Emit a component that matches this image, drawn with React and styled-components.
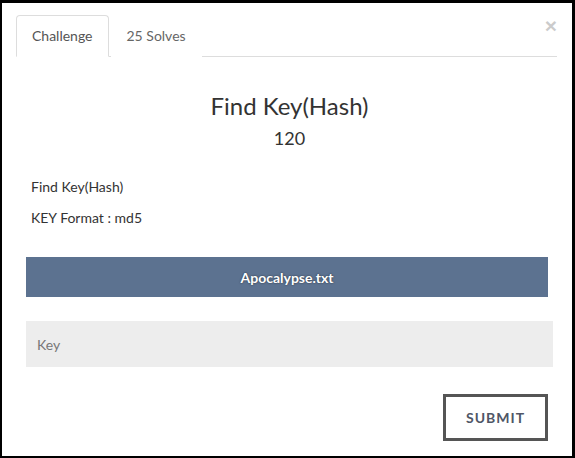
import React from 'react';
import styled, { createGlobalStyle } from 'styled-components';

const GlobalStyle = createGlobalStyle`
  html, body {
    margin: 0;
    padding: 0;
    background: #000;
  }
  body {
    font-family: Lato, "Open Sans", sans-serif;
    color: #333;
  }
`;

const Modal = styled.div`
  position: relative;
  box-sizing: border-box;
  width: 575px;
  height: 458px;
  background: #fff;
  border-style: solid;
  border-color: #000;
  border-width: 3px 3px 2px 2px;
  padding: 12px 15px 0 14px;
`;

const CloseButton = styled.button`
  position: absolute;
  top: 12px;
  right: 15px;
  padding: 0;
  border: 0;
  background: transparent;
  font-family: "Liberation Sans", Arial, sans-serif;
  font-size: 21px;
  font-weight: 700;
  line-height: 1;
  color: #000;
  opacity: 0.2;
  cursor: pointer;
`;

const Tabs = styled.ul`
  display: flex;
  margin: 0;
  padding: 0;
  list-style: none;
  border-bottom: 1px solid #ddd;
`;

const Tab = styled.li`
  margin-bottom: -1px;
  margin-right: 2px;
  padding: 10px 15px;
  font-size: 14px;
  line-height: 20px;
  color: ${(p) => (p.$active ? '#555' : '#666')};
  background: #fff;
  border: 1px solid ${(p) => (p.$active ? '#ddd' : 'transparent')};
  border-bottom-color: ${(p) => (p.$active ? '#fff' : 'transparent')};
  border-radius: 4px 4px 0 0;
  cursor: pointer;
`;

const Body = styled.div`
  padding: 0 4px 0 10px;
`;

const Title = styled.h3`
  margin: 35px 0 0;
  font-size: 24px;
  font-weight: 400;
  line-height: 28px;
  text-align: center;
  color: #333;
`;

const Points = styled.h4`
  margin: 7px 0 0;
  font-size: 18px;
  font-weight: 400;
  line-height: 22px;
  text-align: center;
  color: #333;
`;

const Description = styled.div`
  display: flex;
  flex-direction: column;
  gap: 10px;
  margin-top: 27px;
  padding-left: 5px;
`;

const Paragraph = styled.p`
  margin: 0;
  font-size: 14px;
  line-height: 21px;
  color: #333;
`;

const FileButton = styled.a`
  display: flex;
  align-items: center;
  justify-content: center;
  height: 40px;
  margin: 29px 5px 0 0;
  background: #5c7290;
  color: #fff;
  font-size: 14px;
  font-weight: 700;
  text-decoration: none;
  text-shadow: 0 0 2px rgba(0, 0, 0, 0.6);
  cursor: pointer;
`;

const KeyInput = styled.input`
  display: block;
  box-sizing: border-box;
  width: 100%;
  height: 46px;
  margin-top: 24px;
  padding: 0 11px;
  border: 0;
  outline: none;
  background: #ededed;
  font-family: Lato, sans-serif;
  font-size: 14px;
  color: #333;

  &::placeholder {
    color: #777;
  }
`;

const Footer = styled.div`
  display: flex;
  justify-content: flex-end;
  margin-top: 27px;
  padding-right: 5px;
`;

const SubmitButton = styled.button`
  box-sizing: border-box;
  width: 105px;
  height: 47px;
  border: 3px solid #555;
  background: #fff;
  font-family: Lato, sans-serif;
  font-size: 14px;
  font-weight: 700;
  letter-spacing: 1px;
  color: #4f5666;
  cursor: pointer;
`;

export default function App() {
  return (
    <>
      <GlobalStyle />
      <Modal>
        <CloseButton aria-label="Close">×</CloseButton>
        <Tabs>
          <Tab $active>Challenge</Tab>
          <Tab>25 Solves</Tab>
        </Tabs>
        <Body>
          <Title>Find Key(Hash)</Title>
          <Points>120</Points>
          <Description>
            <Paragraph>Find Key(Hash)</Paragraph>
            <Paragraph>KEY Format : md5</Paragraph>
          </Description>
          <FileButton>Apocalypse.txt</FileButton>
          <KeyInput placeholder="Key" />
          <Footer>
            <SubmitButton>SUBMIT</SubmitButton>
          </Footer>
        </Body>
      </Modal>
    </>
  );
}
